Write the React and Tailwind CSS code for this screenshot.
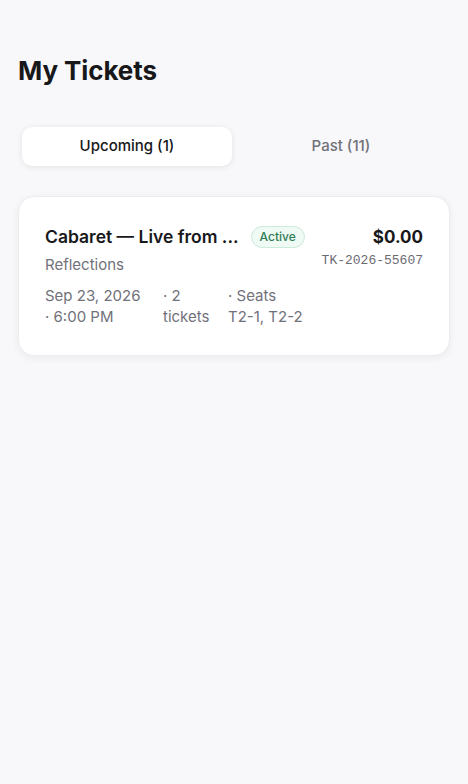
import React, { useState } from 'react';

const tickets = [
  {
    id: 'TK-2026-55607',
    title: 'Cabaret — Live from ...',
    venue: 'Reflections',
    when: 'Sep 23, 2026 · 6:00 PM',
    qty: '· 2 tickets',
    seats: 'T2-1, T2-2',
    price: '$0.00',
    status: 'Active',
  },
];

export default function App() {
  const [tab, setTab] = useState('upcoming');

  return (
    <div className="min-h-screen bg-[#f8f8fa] px-[18px] pt-[53px] font-['Inter',sans-serif] text-[#18181b]">
      <h1 className="text-[26px] leading-[36px] font-bold tracking-[-0.1px]">My Tickets</h1>

      {/* TABS */}
      <div className="mt-[34px] grid grid-cols-2 gap-1 rounded-xl bg-[#f8f8fa] p-1">
        <button
          onClick={() => setTab('upcoming')}
          className={`h-[39px] rounded-[10px] text-[15px] font-medium ${tab === 'upcoming' ? 'bg-white text-[#18181b] shadow-[0_1px_6px_rgba(0,0,0,0.09)]' : 'text-[#71717a]'}`}
        >
          Upcoming (1)
        </button>
        <button
          onClick={() => setTab('past')}
          className={`h-[39px] rounded-[10px] text-[15px] font-medium ${tab === 'past' ? 'bg-white text-[#18181b] shadow-[0_1px_6px_rgba(0,0,0,0.09)]' : 'text-[#71717a]'}`}
        >
          Past (11)
        </button>
      </div>

      {/* LISTA */}
      <div className="mt-[26px] space-y-3">
        {tickets.map((t) => (
          <div
            key={t.id}
            className="flex gap-4 rounded-2xl border border-[#ececef] bg-white px-[26px] pt-[27px] pb-[28px] shadow-[0_2px_8px_rgba(0,0,0,0.06)]"
          >
            <div className="min-w-0 flex-1">
              <div className="flex items-center gap-3">
                <span className="min-w-0 truncate text-[17.5px] leading-[26px] font-semibold">{t.title}</span>
                <span className="shrink-0 rounded-full border border-[#cdebdb] bg-[#eefaf3] px-2 py-[1px] text-[12px] leading-[18px] font-medium text-[#2f7d55]">
                  {t.status}
                </span>
              </div>
              <p className="mt-[3px] text-[15px] leading-[24px] text-[#71717a]">{t.venue}</p>
              <div className="mt-[8px] flex gap-[18px] text-[15px] leading-[21px] text-[#71717a]">
                <span className="w-[100px] shrink-0">{t.when}</span>
                <span className="w-[47px] shrink-0">{t.qty}</span>
                <span className="min-w-0 flex-1">
                  · Seats <span className="whitespace-nowrap">{t.seats}</span>
                </span>
              </div>
            </div>
            <div className="shrink-0 text-right">
              <p className="text-[17px] leading-[26px] font-bold">{t.price}</p>
              <p className="mt-[2px] font-['Liberation_Mono',monospace] text-[13px] leading-[18px] text-[#6b6b73]">{t.id}</p>
            </div>
          </div>
        ))}
      </div>
    </div>
  );
}
